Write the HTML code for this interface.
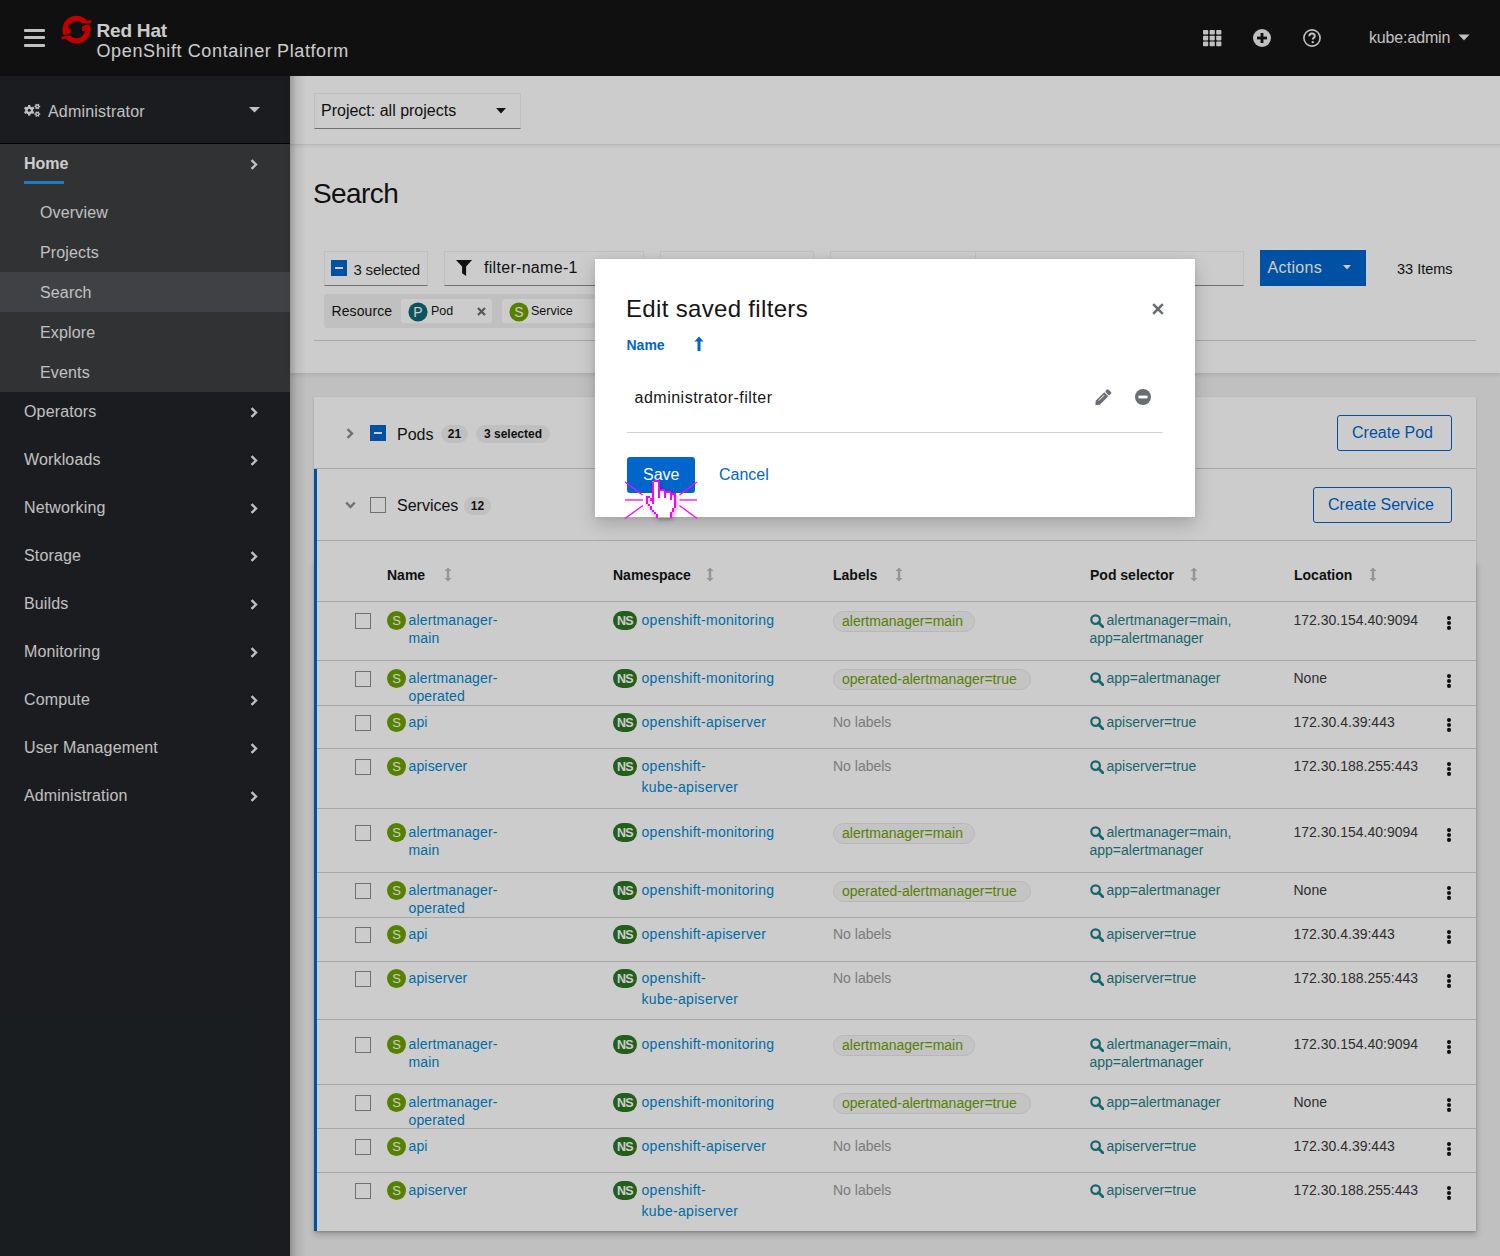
<!DOCTYPE html>
<html><head><meta charset="utf-8"><title>Search</title>
<style>
html,body{margin:0;padding:0;width:1500px;height:1256px;overflow:hidden;background:#cccccc}
body{position:relative;font-family:"Liberation Sans", sans-serif}
.t{position:absolute;white-space:nowrap;margin:0;padding:0}
.r{position:absolute;display:block}
</style></head><body>
<div class="r" style="left:0px;top:0px;width:1500px;height:76px;background:#151515"></div>
<div class="r" style="left:24px;top:29px;width:21px;height:3px;background:#f0f0f0;border-radius:1px"></div>
<div class="r" style="left:24px;top:36px;width:21px;height:3px;background:#f0f0f0;border-radius:1px"></div>
<div class="r" style="left:24px;top:43.5px;width:21px;height:3px;background:#f0f0f0;border-radius:1px"></div>
<svg class="r" style="left:56px;top:12px;" width="40" height="36" viewBox="56 12 40 36"><circle cx="76.5" cy="29.7" r="11.3" fill="none" stroke="#ee0000" stroke-width="5.4"/>
<polygon points="79.5,24.6 93,21.8 93,23.4 80.5,26.2" fill="#151515"/>
<polygon points="73.5,34.8 60,37.6 60,36 72.5,33.2" fill="#151515"/>
<polygon points="85.5,21.2 91.2,19.8 91.6,22.6 86,23.8" fill="#ee0000"/>
<polygon points="82.2,26.1 87.5,25.2 87,31 82.2,31" fill="#ee0000"/>
<polygon points="67.5,38.2 61.8,39.6 61.4,36.8 67,35.6" fill="#ee0000"/>
<polygon points="70.8,33.3 65.5,34.2 66,28.4 70.8,28.4" fill="#ee0000"/></svg>
<div class="t" style="left:96.5px;top:21.12px;font-size:19px;line-height:19px;color:#ffffff;font-weight:700;letter-spacing:-0.2px">Red Hat</div>
<div class="t" style="left:96.5px;top:41.76px;font-size:18px;line-height:18px;color:#ffffff;font-weight:400;letter-spacing:0.62px">OpenShift Container Platform</div>
<svg class="r" style="left:1203px;top:30px;" width="19" height="17" viewBox="0 0 19 17"><g fill="#f0f0f0"><rect x="0.0" y="0.0" width="5.2" height="4.6" rx="0.8"/><rect x="0.0" y="5.8" width="5.2" height="4.6" rx="0.8"/><rect x="0.0" y="11.6" width="5.2" height="4.6" rx="0.8"/><rect x="6.6" y="0.0" width="5.2" height="4.6" rx="0.8"/><rect x="6.6" y="5.8" width="5.2" height="4.6" rx="0.8"/><rect x="6.6" y="11.6" width="5.2" height="4.6" rx="0.8"/><rect x="13.2" y="0.0" width="5.2" height="4.6" rx="0.8"/><rect x="13.2" y="5.8" width="5.2" height="4.6" rx="0.8"/><rect x="13.2" y="11.6" width="5.2" height="4.6" rx="0.8"/></g></svg>
<svg class="r" style="left:1253px;top:29px;" width="18" height="18" viewBox="0 0 18 18"><circle cx="9" cy="9" r="9" fill="#f0f0f0"/><rect x="4" y="7.6" width="10" height="2.8" fill="#151515"/><rect x="7.6" y="4" width="2.8" height="10" fill="#151515"/></svg>
<svg class="r" style="left:1303px;top:29px;" width="18" height="18" viewBox="0 0 18 18"><circle cx="9" cy="9" r="8.1" fill="none" stroke="#f0f0f0" stroke-width="1.6"/><path d="M6.3 7.2 C6.3 5.3 7.5 4.4 9 4.4 C10.6 4.4 11.8 5.4 11.8 6.9 C11.8 8.6 9.8 8.9 9.8 10.6" fill="none" stroke="#f0f0f0" stroke-width="2"/><circle cx="9.8" cy="13.1" r="1.2" fill="#f0f0f0"/></svg>
<div class="t" style="left:1369px;top:30.46px;font-size:16px;line-height:16px;color:#f0f0f0;font-weight:400;letter-spacing:-0.15px">kube:admin</div>
<svg class="r" style="left:1458px;top:34px;" width="12" height="7" viewBox="0 0 12 7"><polygon points="0.5,0.5 11.5,0.5 6,6.5" fill="#f0f0f0"/></svg>
<div class="r" style="left:0px;top:76px;width:290px;height:1180px;background:#212427"></div>
<div class="r" style="left:0px;top:143px;width:290px;height:1px;background:#030303"></div>
<div class="r" style="left:0px;top:144px;width:290px;height:248px;background:#3c3f42"></div>
<div class="r" style="left:0px;top:272px;width:290px;height:40px;background:#4f5255"></div>
<svg class="r" style="left:20px;top:98px;" width="24" height="24" viewBox="20 98 24 24"><circle cx="29.2" cy="110.3" r="3.9" fill="#f0f0f0"/><rect x="28.0" y="104.99999999999999" width="2.4" height="2.4" fill="#f0f0f0" transform="rotate(0.0 29.2 110.3)"/><rect x="28.0" y="104.99999999999999" width="2.4" height="2.4" fill="#f0f0f0" transform="rotate(60.0 29.2 110.3)"/><rect x="28.0" y="104.99999999999999" width="2.4" height="2.4" fill="#f0f0f0" transform="rotate(120.0 29.2 110.3)"/><rect x="28.0" y="104.99999999999999" width="2.4" height="2.4" fill="#f0f0f0" transform="rotate(180.0 29.2 110.3)"/><rect x="28.0" y="104.99999999999999" width="2.4" height="2.4" fill="#f0f0f0" transform="rotate(240.0 29.2 110.3)"/><rect x="28.0" y="104.99999999999999" width="2.4" height="2.4" fill="#f0f0f0" transform="rotate(300.0 29.2 110.3)"/><circle cx="29.2" cy="110.3" r="1.5" fill="#212427"/><circle cx="37.3" cy="106.5" r="2.0" fill="#f0f0f0"/><rect x="36.599999999999994" y="103.6" width="1.4" height="1.9" fill="#f0f0f0" transform="rotate(30.0 37.3 106.5)"/><rect x="36.599999999999994" y="103.6" width="1.4" height="1.9" fill="#f0f0f0" transform="rotate(90.0 37.3 106.5)"/><rect x="36.599999999999994" y="103.6" width="1.4" height="1.9" fill="#f0f0f0" transform="rotate(150.0 37.3 106.5)"/><rect x="36.599999999999994" y="103.6" width="1.4" height="1.9" fill="#f0f0f0" transform="rotate(210.0 37.3 106.5)"/><rect x="36.599999999999994" y="103.6" width="1.4" height="1.9" fill="#f0f0f0" transform="rotate(270.0 37.3 106.5)"/><rect x="36.599999999999994" y="103.6" width="1.4" height="1.9" fill="#f0f0f0" transform="rotate(330.0 37.3 106.5)"/><circle cx="37.3" cy="106.5" r="0.8" fill="#212427"/><circle cx="37.3" cy="114.1" r="2.0" fill="#f0f0f0"/><rect x="36.599999999999994" y="111.19999999999999" width="1.4" height="1.9" fill="#f0f0f0" transform="rotate(30.0 37.3 114.1)"/><rect x="36.599999999999994" y="111.19999999999999" width="1.4" height="1.9" fill="#f0f0f0" transform="rotate(90.0 37.3 114.1)"/><rect x="36.599999999999994" y="111.19999999999999" width="1.4" height="1.9" fill="#f0f0f0" transform="rotate(150.0 37.3 114.1)"/><rect x="36.599999999999994" y="111.19999999999999" width="1.4" height="1.9" fill="#f0f0f0" transform="rotate(210.0 37.3 114.1)"/><rect x="36.599999999999994" y="111.19999999999999" width="1.4" height="1.9" fill="#f0f0f0" transform="rotate(270.0 37.3 114.1)"/><rect x="36.599999999999994" y="111.19999999999999" width="1.4" height="1.9" fill="#f0f0f0" transform="rotate(330.0 37.3 114.1)"/><circle cx="37.3" cy="114.1" r="0.8" fill="#212427"/></svg>
<div class="t" style="left:48px;top:103.86px;font-size:16px;line-height:16px;color:#f0f0f0;font-weight:400;letter-spacing:0.2px">Administrator</div>
<svg class="r" style="left:249px;top:107px;" width="11" height="6" viewBox="0 0 11 6"><polygon points="0,0 11,0 5.5,5.5" fill="#f0f0f0"/></svg>
<div class="t" style="left:24px;top:156.46px;font-size:16px;line-height:16px;color:#ffffff;font-weight:700;">Home</div>
<div class="r" style="left:24px;top:181px;width:40px;height:3px;background:#2b9af3"></div>
<svg class="r" style="left:250px;top:159px;" width="8" height="11" viewBox="0 0 8 11"><polyline points="1.5,1.2 6,5.5 1.5,9.8" fill="none" stroke="#f0f0f0" stroke-width="2.4"/></svg>
<div class="t" style="left:40px;top:204.96px;font-size:16px;line-height:16px;color:#f0f0f0;font-weight:400;letter-spacing:0.15px">Overview</div>
<div class="t" style="left:40px;top:244.96px;font-size:16px;line-height:16px;color:#f0f0f0;font-weight:400;letter-spacing:0.15px">Projects</div>
<div class="t" style="left:40px;top:284.96px;font-size:16px;line-height:16px;color:#f0f0f0;font-weight:400;letter-spacing:0.15px">Search</div>
<div class="t" style="left:40px;top:324.96px;font-size:16px;line-height:16px;color:#f0f0f0;font-weight:400;letter-spacing:0.15px">Explore</div>
<div class="t" style="left:40px;top:364.96px;font-size:16px;line-height:16px;color:#f0f0f0;font-weight:400;letter-spacing:0.15px">Events</div>
<div class="t" style="left:24px;top:404.46px;font-size:16px;line-height:16px;color:#f0f0f0;font-weight:400;letter-spacing:0.15px">Operators</div>
<svg class="r" style="left:250px;top:407px;" width="8" height="11" viewBox="0 0 8 11"><polyline points="1.5,1.2 6,5.5 1.5,9.8" fill="none" stroke="#f0f0f0" stroke-width="2.4"/></svg>
<div class="t" style="left:24px;top:452.46px;font-size:16px;line-height:16px;color:#f0f0f0;font-weight:400;letter-spacing:0.15px">Workloads</div>
<svg class="r" style="left:250px;top:455px;" width="8" height="11" viewBox="0 0 8 11"><polyline points="1.5,1.2 6,5.5 1.5,9.8" fill="none" stroke="#f0f0f0" stroke-width="2.4"/></svg>
<div class="t" style="left:24px;top:500.46px;font-size:16px;line-height:16px;color:#f0f0f0;font-weight:400;letter-spacing:0.15px">Networking</div>
<svg class="r" style="left:250px;top:503px;" width="8" height="11" viewBox="0 0 8 11"><polyline points="1.5,1.2 6,5.5 1.5,9.8" fill="none" stroke="#f0f0f0" stroke-width="2.4"/></svg>
<div class="t" style="left:24px;top:548.46px;font-size:16px;line-height:16px;color:#f0f0f0;font-weight:400;letter-spacing:0.15px">Storage</div>
<svg class="r" style="left:250px;top:551px;" width="8" height="11" viewBox="0 0 8 11"><polyline points="1.5,1.2 6,5.5 1.5,9.8" fill="none" stroke="#f0f0f0" stroke-width="2.4"/></svg>
<div class="t" style="left:24px;top:596.46px;font-size:16px;line-height:16px;color:#f0f0f0;font-weight:400;letter-spacing:0.15px">Builds</div>
<svg class="r" style="left:250px;top:599px;" width="8" height="11" viewBox="0 0 8 11"><polyline points="1.5,1.2 6,5.5 1.5,9.8" fill="none" stroke="#f0f0f0" stroke-width="2.4"/></svg>
<div class="t" style="left:24px;top:644.46px;font-size:16px;line-height:16px;color:#f0f0f0;font-weight:400;letter-spacing:0.15px">Monitoring</div>
<svg class="r" style="left:250px;top:647px;" width="8" height="11" viewBox="0 0 8 11"><polyline points="1.5,1.2 6,5.5 1.5,9.8" fill="none" stroke="#f0f0f0" stroke-width="2.4"/></svg>
<div class="t" style="left:24px;top:692.46px;font-size:16px;line-height:16px;color:#f0f0f0;font-weight:400;letter-spacing:0.15px">Compute</div>
<svg class="r" style="left:250px;top:695px;" width="8" height="11" viewBox="0 0 8 11"><polyline points="1.5,1.2 6,5.5 1.5,9.8" fill="none" stroke="#f0f0f0" stroke-width="2.4"/></svg>
<div class="t" style="left:24px;top:740.46px;font-size:16px;line-height:16px;color:#f0f0f0;font-weight:400;letter-spacing:0.15px">User Management</div>
<svg class="r" style="left:250px;top:743px;" width="8" height="11" viewBox="0 0 8 11"><polyline points="1.5,1.2 6,5.5 1.5,9.8" fill="none" stroke="#f0f0f0" stroke-width="2.4"/></svg>
<div class="t" style="left:24px;top:788.46px;font-size:16px;line-height:16px;color:#f0f0f0;font-weight:400;letter-spacing:0.15px">Administration</div>
<svg class="r" style="left:250px;top:791px;" width="8" height="11" viewBox="0 0 8 11"><polyline points="1.5,1.2 6,5.5 1.5,9.8" fill="none" stroke="#f0f0f0" stroke-width="2.4"/></svg>
<div class="r" style="left:290px;top:76px;width:1210px;height:1180px;background:#f0f0f0"></div>
<div class="r" style="left:290px;top:76px;width:1210px;height:297px;background:#ffffff;box-shadow:0 2px 4px rgba(3,3,3,0.1)"></div>
<div class="r" style="left:290px;top:144px;width:1210px;height:1px;background:#e8e8e8"></div>
<div class="r" style="left:290px;top:145px;width:1210px;height:4px;background:linear-gradient(to bottom, rgba(3,3,3,0.05), rgba(3,3,3,0))"></div>
<div class="r" style="left:290px;top:76px;width:16px;height:1180px;background:linear-gradient(to right, rgba(3,3,3,0.24), rgba(3,3,3,0.08) 40%, rgba(3,3,3,0))"></div>
<div class="r" style="left:314px;top:93px;width:207px;height:36px;background:#fff;box-sizing:border-box;border:1px solid #f0f0f0;border-bottom-color:#8a8d90"></div>
<div class="t" style="left:321px;top:103.16px;font-size:16px;line-height:16px;color:#151515;font-weight:400;">Project: all projects</div>
<svg class="r" style="left:496px;top:108px;" width="10" height="6.5" viewBox="0 0 10 6.5"><polygon points="0,0 10,0 5.0,5.5" fill="#151515"/></svg>
<div class="t" style="left:313px;top:180.30px;font-size:28px;line-height:28px;color:#151515;font-weight:400;letter-spacing:-0.6px">Search</div>
<div class="r" style="left:324px;top:251px;width:104px;height:35px;background:#fff;box-sizing:border-box;border:1px solid #f0f0f0;border-bottom-color:#8a8d90"></div>
<svg class="r" style="left:331px;top:260px;" width="16" height="16" viewBox="0 0 16 16"><rect x="0" y="0" width="16" height="16" fill="#0066cc"/><rect x="4" y="7" width="8" height="2" fill="#fff"/></svg>
<div class="t" style="left:353.5px;top:261.50px;font-size:15px;line-height:15px;color:#1f1f1f;font-weight:400;letter-spacing:-0.2px">3 selected</div>
<div class="r" style="left:444px;top:251px;width:200px;height:35px;background:#fff;box-sizing:border-box;border:1px solid #f0f0f0;border-bottom-color:#8a8d90"></div>
<svg class="r" style="left:456px;top:259px;" width="16" height="18" viewBox="0 0 16 18"><path d="M0 1 H16 L10.1 7.6 V17 L6.1 14.2 V7.6 Z" fill="#151515"/></svg>
<div class="t" style="left:484px;top:260.46px;font-size:16px;line-height:16px;color:#151515;font-weight:400;letter-spacing:0.3px">filter-name-1</div>
<div class="r" style="left:660px;top:251px;width:154px;height:35px;background:#fff;box-sizing:border-box;border:1px solid #f0f0f0;border-bottom-color:#8a8d90"></div>
<div class="r" style="left:830px;top:251px;width:146px;height:35px;background:#fff;box-sizing:border-box;border:1px solid #f0f0f0;border-bottom-color:#8a8d90"></div>
<div class="r" style="left:975px;top:251px;width:269px;height:35px;background:#fff;box-sizing:border-box;border:1px solid #f0f0f0;border-bottom-color:#8a8d90"></div>
<div class="r" style="left:1260px;top:250px;width:106px;height:36px;background:#0066cc"></div>
<div class="t" style="left:1267.5px;top:260.46px;font-size:16px;line-height:16px;color:#ffffff;font-weight:400;letter-spacing:0.3px">Actions</div>
<svg class="r" style="left:1343px;top:265px;" width="8" height="5.5" viewBox="0 0 8 5.5"><polygon points="0,0 8,0 4.0,4.5" fill="#ffffff"/></svg>
<div class="t" style="left:1397px;top:262.23px;font-size:14.5px;line-height:14.5px;color:#151515;font-weight:400;">33 Items</div>
<div class="r" style="left:324px;top:294px;width:560px;height:34px;background:#f0f0f0;border-radius:3px"></div>
<div class="t" style="left:331.5px;top:304.15px;font-size:14px;line-height:14px;color:#151515;font-weight:400;letter-spacing:0.1px">Resource</div>
<div class="r" style="left:401px;top:299px;width:91px;height:24px;background:#fff;border-radius:3px"></div>
<svg class="r" style="left:408px;top:302px;" width="20" height="20" viewBox="0 0 20 20"><circle cx="10" cy="10" r="9.6" fill="#0e6a73"/></svg>
<div class="t" style="left:408px;top:302px;width:20px;height:20px;line-height:20px;text-align:center;font-size:14px;color:#fff">P</div>
<div class="t" style="left:431px;top:305.42px;font-size:12.5px;line-height:12.5px;color:#151515;font-weight:400;">Pod</div>
<svg class="r" style="left:477px;top:307px;" width="9" height="9" viewBox="0 0 9 9"><path d="M1 1 L8 8 M8 1 L1 8" stroke="#6a6e73" stroke-width="2.2"/></svg>
<div class="r" style="left:502px;top:299px;width:200px;height:24px;background:#fff;border-radius:3px"></div>
<svg class="r" style="left:509px;top:302px;" width="20" height="20" viewBox="0 0 20 20"><circle cx="10" cy="10" r="9.6" fill="#6ca100"/></svg>
<div class="t" style="left:509px;top:302px;width:20px;height:20px;line-height:20px;text-align:center;font-size:14px;color:#fff">S</div>
<div class="t" style="left:531px;top:305.42px;font-size:12.5px;line-height:12.5px;color:#151515;font-weight:400;">Service</div>
<div class="r" style="left:314px;top:340px;width:1162px;height:1px;background:#d2d2d2"></div>
<div class="r" style="left:314px;top:560px;width:1162px;height:671px;box-shadow:1px 4px 6px rgba(3,3,3,0.2)"></div>
<div class="r" style="left:314px;top:397px;width:1162px;height:834px;background:#fff;box-shadow:0 1px 2px rgba(3,3,3,0.14), 0 0 1px rgba(3,3,3,0.08)"></div>
<svg class="r" style="left:346px;top:428px;" width="8" height="11" viewBox="0 0 8 11"><polyline points="1.5,1.2 6,5.5 1.5,9.8" fill="none" stroke="#8a8d90" stroke-width="2.4"/></svg>
<svg class="r" style="left:370px;top:425px;" width="16" height="16" viewBox="0 0 16 16"><rect x="0" y="0" width="16" height="16" fill="#0066cc"/><rect x="4" y="7" width="8" height="2" fill="#fff"/></svg>
<div class="t" style="left:397px;top:426.86px;font-size:16px;line-height:16px;color:#151515;font-weight:400;">Pods</div>
<div class="r" style="left:441px;top:425px;width:27px;height:18px;background:#f0f0f0;border-radius:9px"></div>
<div class="t" style="left:441px;top:425px;width:27px;height:18px;line-height:18px;text-align:center;font-size:12px;font-weight:700;color:#151515">21</div>
<div class="r" style="left:476px;top:425px;width:74px;height:18px;background:#f0f0f0;border-radius:9px"></div>
<div class="t" style="left:476px;top:425px;width:74px;height:18px;line-height:18px;text-align:center;font-size:12px;font-weight:700;color:#151515">3 selected</div>
<div class="r" style="left:1337px;top:415px;width:115px;height:36px;box-sizing:border-box;border:1px solid #0066cc;border-radius:3px"></div>
<div class="t" style="left:1352px;top:425.46px;font-size:16px;line-height:16px;color:#0066cc;font-weight:400;">Create Pod</div>
<div class="r" style="left:314px;top:468px;width:1162px;height:1px;background:#d2d2d2"></div>
<div class="r" style="left:314px;top:469px;width:3px;height:762px;background:#0066cc"></div>
<svg class="r" style="left:345px;top:501px;" width="11" height="8" viewBox="0 0 11 8"><polyline points="1.2,1.5 5.5,6 9.8,1.5" fill="none" stroke="#8a8d90" stroke-width="2.4"/></svg>
<svg class="r" style="left:370px;top:497px;" width="16" height="16" viewBox="0 0 16 16"><rect x="0.5" y="0.5" width="15" height="15" fill="#fff" stroke="#8a8d90" stroke-width="1"/></svg>
<div class="t" style="left:397px;top:498.46px;font-size:16px;line-height:16px;color:#151515;font-weight:400;">Services</div>
<div class="r" style="left:464px;top:497px;width:27px;height:18px;background:#f0f0f0;border-radius:9px"></div>
<div class="t" style="left:464px;top:497px;width:27px;height:18px;line-height:18px;text-align:center;font-size:12px;font-weight:700;color:#151515">12</div>
<div class="r" style="left:1313px;top:487px;width:139px;height:36px;box-sizing:border-box;border:1px solid #0066cc;border-radius:3px"></div>
<div class="t" style="left:1328px;top:497.46px;font-size:16px;line-height:16px;color:#0066cc;font-weight:400;">Create Service</div>
<div class="r" style="left:317px;top:540px;width:1159px;height:1px;background:#d2d2d2"></div>
<div class="t" style="left:387px;top:567.55px;font-size:14px;line-height:14px;color:#151515;font-weight:700;">Name</div>
<svg class="r" style="left:444px;top:567px;" width="8" height="15" viewBox="0 0 8 15"><path d="M4 0.5 L7.5 4 H5.2 V11 H7.5 L4 14.5 L0.5 11 H2.8 V4 H0.5 Z" fill="#b8bbbe"/></svg>
<div class="t" style="left:613px;top:567.55px;font-size:14px;line-height:14px;color:#151515;font-weight:700;">Namespace</div>
<svg class="r" style="left:706px;top:567px;" width="8" height="15" viewBox="0 0 8 15"><path d="M4 0.5 L7.5 4 H5.2 V11 H7.5 L4 14.5 L0.5 11 H2.8 V4 H0.5 Z" fill="#b8bbbe"/></svg>
<div class="t" style="left:833px;top:567.55px;font-size:14px;line-height:14px;color:#151515;font-weight:700;">Labels</div>
<svg class="r" style="left:895px;top:567px;" width="8" height="15" viewBox="0 0 8 15"><path d="M4 0.5 L7.5 4 H5.2 V11 H7.5 L4 14.5 L0.5 11 H2.8 V4 H0.5 Z" fill="#b8bbbe"/></svg>
<div class="t" style="left:1090px;top:567.55px;font-size:14px;line-height:14px;color:#151515;font-weight:700;">Pod selector</div>
<svg class="r" style="left:1190px;top:567px;" width="8" height="15" viewBox="0 0 8 15"><path d="M4 0.5 L7.5 4 H5.2 V11 H7.5 L4 14.5 L0.5 11 H2.8 V4 H0.5 Z" fill="#b8bbbe"/></svg>
<div class="t" style="left:1294px;top:567.55px;font-size:14px;line-height:14px;color:#151515;font-weight:700;">Location</div>
<svg class="r" style="left:1369px;top:567px;" width="8" height="15" viewBox="0 0 8 15"><path d="M4 0.5 L7.5 4 H5.2 V11 H7.5 L4 14.5 L0.5 11 H2.8 V4 H0.5 Z" fill="#b8bbbe"/></svg>
<div class="r" style="left:317px;top:601px;width:1159px;height:1px;background:#d2d2d2"></div>
<svg class="r" style="left:355px;top:613px;" width="16" height="16" viewBox="0 0 16 16"><rect x="0.5" y="0.5" width="15" height="15" fill="#fff" stroke="#8a8d90" stroke-width="1"/></svg>
<svg class="r" style="left:387px;top:611px;" width="19" height="19" viewBox="0 0 19 19"><circle cx="9.5" cy="9.5" r="9.5" fill="#6ca100"/></svg>
<div class="t" style="left:387px;top:611px;width:19px;height:19px;line-height:20.5px;text-align:center;font-size:13px;font-weight:400;color:#fff">S</div>
<div class="t" style="left:408.5px;top:613.45px;font-size:14px;line-height:14px;color:#0088ce;font-weight:400;letter-spacing:0.15px">alertmanager-</div>
<div class="t" style="left:408.5px;top:631.45px;font-size:14px;line-height:14px;color:#0088ce;font-weight:400;letter-spacing:0.15px">main</div>
<div class="r" style="left:613px;top:611px;width:24px;height:19px;background:#2d7623;border-radius:10px"></div>
<div class="t" style="left:613px;top:611px;width:24px;height:19px;line-height:20px;text-align:center;font-size:12.5px;font-weight:700;color:#fff;letter-spacing:-0.6px">NS</div>
<div class="t" style="left:641.5px;top:613.45px;font-size:14px;line-height:14px;color:#0088ce;font-weight:400;letter-spacing:0.3px">openshift-monitoring</div>
<div class="r" style="left:833px;top:611px;width:142px;height:21px;box-sizing:border-box;background:#f5f5f5;border:1px solid #e6e6e6;border-radius:11px"></div>
<div class="t" style="left:842px;top:614.35px;font-size:14px;line-height:14px;color:#6ca100;font-weight:400;">alertmanager=main</div>
<svg class="r" style="left:1090px;top:614px;" width="14" height="14" viewBox="0 0 14 14"><circle cx="5.6" cy="5.6" r="4.3" fill="none" stroke="#1f7f86" stroke-width="2.2"/><line x1="8.6" y1="8.6" x2="12.8" y2="12.8" stroke="#1f7f86" stroke-width="2.8" stroke-linecap="round"/></svg>
<div class="t" style="left:1106.5px;top:613.45px;font-size:14px;line-height:14px;color:#1f7f86;font-weight:400;">alertmanager=main,</div>
<div class="t" style="left:1089.5px;top:631.45px;font-size:14px;line-height:14px;color:#1f7f86;font-weight:400;">app=alertmanager</div>
<div class="t" style="left:1293.5px;top:613.45px;font-size:14px;line-height:14px;color:#3a3a3a;font-weight:400;">172.30.154.40:9094</div>
<svg class="r" style="left:1446px;top:616px;" width="6" height="16" viewBox="0 0 6 16"><g fill="#151515"><circle cx="3" cy="2.1" r="2.05"/><circle cx="3" cy="7" r="2.05"/><circle cx="3" cy="11.9" r="2.05"/></g></svg>
<div class="r" style="left:317px;top:660px;width:1159px;height:1px;background:#d2d2d2"></div>
<svg class="r" style="left:355px;top:671px;" width="16" height="16" viewBox="0 0 16 16"><rect x="0.5" y="0.5" width="15" height="15" fill="#fff" stroke="#8a8d90" stroke-width="1"/></svg>
<svg class="r" style="left:387px;top:669px;" width="19" height="19" viewBox="0 0 19 19"><circle cx="9.5" cy="9.5" r="9.5" fill="#6ca100"/></svg>
<div class="t" style="left:387px;top:669px;width:19px;height:19px;line-height:20.5px;text-align:center;font-size:13px;font-weight:400;color:#fff">S</div>
<div class="t" style="left:408.5px;top:671.45px;font-size:14px;line-height:14px;color:#0088ce;font-weight:400;letter-spacing:0.15px">alertmanager-</div>
<div class="t" style="left:408.5px;top:689.45px;font-size:14px;line-height:14px;color:#0088ce;font-weight:400;letter-spacing:0.15px">operated</div>
<div class="r" style="left:613px;top:669px;width:24px;height:19px;background:#2d7623;border-radius:10px"></div>
<div class="t" style="left:613px;top:669px;width:24px;height:19px;line-height:20px;text-align:center;font-size:12.5px;font-weight:700;color:#fff;letter-spacing:-0.6px">NS</div>
<div class="t" style="left:641.5px;top:671.45px;font-size:14px;line-height:14px;color:#0088ce;font-weight:400;letter-spacing:0.3px">openshift-monitoring</div>
<div class="r" style="left:833px;top:669px;width:198px;height:21px;box-sizing:border-box;background:#f5f5f5;border:1px solid #e6e6e6;border-radius:11px"></div>
<div class="t" style="left:842px;top:672.35px;font-size:14px;line-height:14px;color:#6ca100;font-weight:400;">operated-alertmanager=true</div>
<svg class="r" style="left:1090px;top:672px;" width="14" height="14" viewBox="0 0 14 14"><circle cx="5.6" cy="5.6" r="4.3" fill="none" stroke="#1f7f86" stroke-width="2.2"/><line x1="8.6" y1="8.6" x2="12.8" y2="12.8" stroke="#1f7f86" stroke-width="2.8" stroke-linecap="round"/></svg>
<div class="t" style="left:1106.5px;top:671.45px;font-size:14px;line-height:14px;color:#1f7f86;font-weight:400;">app=alertmanager</div>
<div class="t" style="left:1293.5px;top:671.45px;font-size:14px;line-height:14px;color:#3a3a3a;font-weight:400;">None</div>
<svg class="r" style="left:1446px;top:674px;" width="6" height="16" viewBox="0 0 6 16"><g fill="#151515"><circle cx="3" cy="2.1" r="2.05"/><circle cx="3" cy="7" r="2.05"/><circle cx="3" cy="11.9" r="2.05"/></g></svg>
<div class="r" style="left:317px;top:705px;width:1159px;height:1px;background:#d2d2d2"></div>
<svg class="r" style="left:355px;top:715px;" width="16" height="16" viewBox="0 0 16 16"><rect x="0.5" y="0.5" width="15" height="15" fill="#fff" stroke="#8a8d90" stroke-width="1"/></svg>
<svg class="r" style="left:387px;top:713px;" width="19" height="19" viewBox="0 0 19 19"><circle cx="9.5" cy="9.5" r="9.5" fill="#6ca100"/></svg>
<div class="t" style="left:387px;top:713px;width:19px;height:19px;line-height:20.5px;text-align:center;font-size:13px;font-weight:400;color:#fff">S</div>
<div class="t" style="left:408.5px;top:715.45px;font-size:14px;line-height:14px;color:#0088ce;font-weight:400;letter-spacing:0.15px">api</div>
<div class="r" style="left:613px;top:713px;width:24px;height:19px;background:#2d7623;border-radius:10px"></div>
<div class="t" style="left:613px;top:713px;width:24px;height:19px;line-height:20px;text-align:center;font-size:12.5px;font-weight:700;color:#fff;letter-spacing:-0.6px">NS</div>
<div class="t" style="left:641.5px;top:715.45px;font-size:14px;line-height:14px;color:#0088ce;font-weight:400;letter-spacing:0.3px">openshift-apiserver</div>
<div class="t" style="left:833px;top:715.45px;font-size:14px;line-height:14px;color:#9a9a9a;font-weight:400;">No labels</div>
<svg class="r" style="left:1090px;top:716px;" width="14" height="14" viewBox="0 0 14 14"><circle cx="5.6" cy="5.6" r="4.3" fill="none" stroke="#1f7f86" stroke-width="2.2"/><line x1="8.6" y1="8.6" x2="12.8" y2="12.8" stroke="#1f7f86" stroke-width="2.8" stroke-linecap="round"/></svg>
<div class="t" style="left:1106.5px;top:715.45px;font-size:14px;line-height:14px;color:#1f7f86;font-weight:400;">apiserver=true</div>
<div class="t" style="left:1293.5px;top:715.45px;font-size:14px;line-height:14px;color:#3a3a3a;font-weight:400;">172.30.4.39:443</div>
<svg class="r" style="left:1446px;top:718px;" width="6" height="16" viewBox="0 0 6 16"><g fill="#151515"><circle cx="3" cy="2.1" r="2.05"/><circle cx="3" cy="7" r="2.05"/><circle cx="3" cy="11.9" r="2.05"/></g></svg>
<div class="r" style="left:317px;top:748px;width:1159px;height:1px;background:#d2d2d2"></div>
<svg class="r" style="left:355px;top:759px;" width="16" height="16" viewBox="0 0 16 16"><rect x="0.5" y="0.5" width="15" height="15" fill="#fff" stroke="#8a8d90" stroke-width="1"/></svg>
<svg class="r" style="left:387px;top:757px;" width="19" height="19" viewBox="0 0 19 19"><circle cx="9.5" cy="9.5" r="9.5" fill="#6ca100"/></svg>
<div class="t" style="left:387px;top:757px;width:19px;height:19px;line-height:20.5px;text-align:center;font-size:13px;font-weight:400;color:#fff">S</div>
<div class="t" style="left:408.5px;top:759.45px;font-size:14px;line-height:14px;color:#0088ce;font-weight:400;letter-spacing:0.15px">apiserver</div>
<div class="r" style="left:613px;top:757px;width:24px;height:19px;background:#2d7623;border-radius:10px"></div>
<div class="t" style="left:613px;top:757px;width:24px;height:19px;line-height:20px;text-align:center;font-size:12.5px;font-weight:700;color:#fff;letter-spacing:-0.6px">NS</div>
<div class="t" style="left:641.5px;top:759.45px;font-size:14px;line-height:14px;color:#0088ce;font-weight:400;letter-spacing:0.3px">openshift-</div>
<div class="t" style="left:641.5px;top:780.45px;font-size:14px;line-height:14px;color:#0088ce;font-weight:400;letter-spacing:0.3px">kube-apiserver</div>
<div class="t" style="left:833px;top:759.45px;font-size:14px;line-height:14px;color:#9a9a9a;font-weight:400;">No labels</div>
<svg class="r" style="left:1090px;top:760px;" width="14" height="14" viewBox="0 0 14 14"><circle cx="5.6" cy="5.6" r="4.3" fill="none" stroke="#1f7f86" stroke-width="2.2"/><line x1="8.6" y1="8.6" x2="12.8" y2="12.8" stroke="#1f7f86" stroke-width="2.8" stroke-linecap="round"/></svg>
<div class="t" style="left:1106.5px;top:759.45px;font-size:14px;line-height:14px;color:#1f7f86;font-weight:400;">apiserver=true</div>
<div class="t" style="left:1293.5px;top:759.45px;font-size:14px;line-height:14px;color:#3a3a3a;font-weight:400;">172.30.188.255:443</div>
<svg class="r" style="left:1446px;top:762px;" width="6" height="16" viewBox="0 0 6 16"><g fill="#151515"><circle cx="3" cy="2.1" r="2.05"/><circle cx="3" cy="7" r="2.05"/><circle cx="3" cy="11.9" r="2.05"/></g></svg>
<div class="r" style="left:317px;top:808px;width:1159px;height:1px;background:#d2d2d2"></div>
<svg class="r" style="left:355px;top:825px;" width="16" height="16" viewBox="0 0 16 16"><rect x="0.5" y="0.5" width="15" height="15" fill="#fff" stroke="#8a8d90" stroke-width="1"/></svg>
<svg class="r" style="left:387px;top:823px;" width="19" height="19" viewBox="0 0 19 19"><circle cx="9.5" cy="9.5" r="9.5" fill="#6ca100"/></svg>
<div class="t" style="left:387px;top:823px;width:19px;height:19px;line-height:20.5px;text-align:center;font-size:13px;font-weight:400;color:#fff">S</div>
<div class="t" style="left:408.5px;top:825.45px;font-size:14px;line-height:14px;color:#0088ce;font-weight:400;letter-spacing:0.15px">alertmanager-</div>
<div class="t" style="left:408.5px;top:843.45px;font-size:14px;line-height:14px;color:#0088ce;font-weight:400;letter-spacing:0.15px">main</div>
<div class="r" style="left:613px;top:823px;width:24px;height:19px;background:#2d7623;border-radius:10px"></div>
<div class="t" style="left:613px;top:823px;width:24px;height:19px;line-height:20px;text-align:center;font-size:12.5px;font-weight:700;color:#fff;letter-spacing:-0.6px">NS</div>
<div class="t" style="left:641.5px;top:825.45px;font-size:14px;line-height:14px;color:#0088ce;font-weight:400;letter-spacing:0.3px">openshift-monitoring</div>
<div class="r" style="left:833px;top:823px;width:142px;height:21px;box-sizing:border-box;background:#f5f5f5;border:1px solid #e6e6e6;border-radius:11px"></div>
<div class="t" style="left:842px;top:826.35px;font-size:14px;line-height:14px;color:#6ca100;font-weight:400;">alertmanager=main</div>
<svg class="r" style="left:1090px;top:826px;" width="14" height="14" viewBox="0 0 14 14"><circle cx="5.6" cy="5.6" r="4.3" fill="none" stroke="#1f7f86" stroke-width="2.2"/><line x1="8.6" y1="8.6" x2="12.8" y2="12.8" stroke="#1f7f86" stroke-width="2.8" stroke-linecap="round"/></svg>
<div class="t" style="left:1106.5px;top:825.45px;font-size:14px;line-height:14px;color:#1f7f86;font-weight:400;">alertmanager=main,</div>
<div class="t" style="left:1089.5px;top:843.45px;font-size:14px;line-height:14px;color:#1f7f86;font-weight:400;">app=alertmanager</div>
<div class="t" style="left:1293.5px;top:825.45px;font-size:14px;line-height:14px;color:#3a3a3a;font-weight:400;">172.30.154.40:9094</div>
<svg class="r" style="left:1446px;top:828px;" width="6" height="16" viewBox="0 0 6 16"><g fill="#151515"><circle cx="3" cy="2.1" r="2.05"/><circle cx="3" cy="7" r="2.05"/><circle cx="3" cy="11.9" r="2.05"/></g></svg>
<div class="r" style="left:317px;top:872px;width:1159px;height:1px;background:#d2d2d2"></div>
<svg class="r" style="left:355px;top:883px;" width="16" height="16" viewBox="0 0 16 16"><rect x="0.5" y="0.5" width="15" height="15" fill="#fff" stroke="#8a8d90" stroke-width="1"/></svg>
<svg class="r" style="left:387px;top:881px;" width="19" height="19" viewBox="0 0 19 19"><circle cx="9.5" cy="9.5" r="9.5" fill="#6ca100"/></svg>
<div class="t" style="left:387px;top:881px;width:19px;height:19px;line-height:20.5px;text-align:center;font-size:13px;font-weight:400;color:#fff">S</div>
<div class="t" style="left:408.5px;top:883.45px;font-size:14px;line-height:14px;color:#0088ce;font-weight:400;letter-spacing:0.15px">alertmanager-</div>
<div class="t" style="left:408.5px;top:901.45px;font-size:14px;line-height:14px;color:#0088ce;font-weight:400;letter-spacing:0.15px">operated</div>
<div class="r" style="left:613px;top:881px;width:24px;height:19px;background:#2d7623;border-radius:10px"></div>
<div class="t" style="left:613px;top:881px;width:24px;height:19px;line-height:20px;text-align:center;font-size:12.5px;font-weight:700;color:#fff;letter-spacing:-0.6px">NS</div>
<div class="t" style="left:641.5px;top:883.45px;font-size:14px;line-height:14px;color:#0088ce;font-weight:400;letter-spacing:0.3px">openshift-monitoring</div>
<div class="r" style="left:833px;top:881px;width:198px;height:21px;box-sizing:border-box;background:#f5f5f5;border:1px solid #e6e6e6;border-radius:11px"></div>
<div class="t" style="left:842px;top:884.35px;font-size:14px;line-height:14px;color:#6ca100;font-weight:400;">operated-alertmanager=true</div>
<svg class="r" style="left:1090px;top:884px;" width="14" height="14" viewBox="0 0 14 14"><circle cx="5.6" cy="5.6" r="4.3" fill="none" stroke="#1f7f86" stroke-width="2.2"/><line x1="8.6" y1="8.6" x2="12.8" y2="12.8" stroke="#1f7f86" stroke-width="2.8" stroke-linecap="round"/></svg>
<div class="t" style="left:1106.5px;top:883.45px;font-size:14px;line-height:14px;color:#1f7f86;font-weight:400;">app=alertmanager</div>
<div class="t" style="left:1293.5px;top:883.45px;font-size:14px;line-height:14px;color:#3a3a3a;font-weight:400;">None</div>
<svg class="r" style="left:1446px;top:886px;" width="6" height="16" viewBox="0 0 6 16"><g fill="#151515"><circle cx="3" cy="2.1" r="2.05"/><circle cx="3" cy="7" r="2.05"/><circle cx="3" cy="11.9" r="2.05"/></g></svg>
<div class="r" style="left:317px;top:917px;width:1159px;height:1px;background:#d2d2d2"></div>
<svg class="r" style="left:355px;top:927px;" width="16" height="16" viewBox="0 0 16 16"><rect x="0.5" y="0.5" width="15" height="15" fill="#fff" stroke="#8a8d90" stroke-width="1"/></svg>
<svg class="r" style="left:387px;top:925px;" width="19" height="19" viewBox="0 0 19 19"><circle cx="9.5" cy="9.5" r="9.5" fill="#6ca100"/></svg>
<div class="t" style="left:387px;top:925px;width:19px;height:19px;line-height:20.5px;text-align:center;font-size:13px;font-weight:400;color:#fff">S</div>
<div class="t" style="left:408.5px;top:927.45px;font-size:14px;line-height:14px;color:#0088ce;font-weight:400;letter-spacing:0.15px">api</div>
<div class="r" style="left:613px;top:925px;width:24px;height:19px;background:#2d7623;border-radius:10px"></div>
<div class="t" style="left:613px;top:925px;width:24px;height:19px;line-height:20px;text-align:center;font-size:12.5px;font-weight:700;color:#fff;letter-spacing:-0.6px">NS</div>
<div class="t" style="left:641.5px;top:927.45px;font-size:14px;line-height:14px;color:#0088ce;font-weight:400;letter-spacing:0.3px">openshift-apiserver</div>
<div class="t" style="left:833px;top:927.45px;font-size:14px;line-height:14px;color:#9a9a9a;font-weight:400;">No labels</div>
<svg class="r" style="left:1090px;top:928px;" width="14" height="14" viewBox="0 0 14 14"><circle cx="5.6" cy="5.6" r="4.3" fill="none" stroke="#1f7f86" stroke-width="2.2"/><line x1="8.6" y1="8.6" x2="12.8" y2="12.8" stroke="#1f7f86" stroke-width="2.8" stroke-linecap="round"/></svg>
<div class="t" style="left:1106.5px;top:927.45px;font-size:14px;line-height:14px;color:#1f7f86;font-weight:400;">apiserver=true</div>
<div class="t" style="left:1293.5px;top:927.45px;font-size:14px;line-height:14px;color:#3a3a3a;font-weight:400;">172.30.4.39:443</div>
<svg class="r" style="left:1446px;top:930px;" width="6" height="16" viewBox="0 0 6 16"><g fill="#151515"><circle cx="3" cy="2.1" r="2.05"/><circle cx="3" cy="7" r="2.05"/><circle cx="3" cy="11.9" r="2.05"/></g></svg>
<div class="r" style="left:317px;top:961px;width:1159px;height:1px;background:#d2d2d2"></div>
<svg class="r" style="left:355px;top:971px;" width="16" height="16" viewBox="0 0 16 16"><rect x="0.5" y="0.5" width="15" height="15" fill="#fff" stroke="#8a8d90" stroke-width="1"/></svg>
<svg class="r" style="left:387px;top:969px;" width="19" height="19" viewBox="0 0 19 19"><circle cx="9.5" cy="9.5" r="9.5" fill="#6ca100"/></svg>
<div class="t" style="left:387px;top:969px;width:19px;height:19px;line-height:20.5px;text-align:center;font-size:13px;font-weight:400;color:#fff">S</div>
<div class="t" style="left:408.5px;top:971.45px;font-size:14px;line-height:14px;color:#0088ce;font-weight:400;letter-spacing:0.15px">apiserver</div>
<div class="r" style="left:613px;top:969px;width:24px;height:19px;background:#2d7623;border-radius:10px"></div>
<div class="t" style="left:613px;top:969px;width:24px;height:19px;line-height:20px;text-align:center;font-size:12.5px;font-weight:700;color:#fff;letter-spacing:-0.6px">NS</div>
<div class="t" style="left:641.5px;top:971.45px;font-size:14px;line-height:14px;color:#0088ce;font-weight:400;letter-spacing:0.3px">openshift-</div>
<div class="t" style="left:641.5px;top:992.45px;font-size:14px;line-height:14px;color:#0088ce;font-weight:400;letter-spacing:0.3px">kube-apiserver</div>
<div class="t" style="left:833px;top:971.45px;font-size:14px;line-height:14px;color:#9a9a9a;font-weight:400;">No labels</div>
<svg class="r" style="left:1090px;top:972px;" width="14" height="14" viewBox="0 0 14 14"><circle cx="5.6" cy="5.6" r="4.3" fill="none" stroke="#1f7f86" stroke-width="2.2"/><line x1="8.6" y1="8.6" x2="12.8" y2="12.8" stroke="#1f7f86" stroke-width="2.8" stroke-linecap="round"/></svg>
<div class="t" style="left:1106.5px;top:971.45px;font-size:14px;line-height:14px;color:#1f7f86;font-weight:400;">apiserver=true</div>
<div class="t" style="left:1293.5px;top:971.45px;font-size:14px;line-height:14px;color:#3a3a3a;font-weight:400;">172.30.188.255:443</div>
<svg class="r" style="left:1446px;top:974px;" width="6" height="16" viewBox="0 0 6 16"><g fill="#151515"><circle cx="3" cy="2.1" r="2.05"/><circle cx="3" cy="7" r="2.05"/><circle cx="3" cy="11.9" r="2.05"/></g></svg>
<div class="r" style="left:317px;top:1019px;width:1159px;height:1px;background:#d2d2d2"></div>
<svg class="r" style="left:355px;top:1037px;" width="16" height="16" viewBox="0 0 16 16"><rect x="0.5" y="0.5" width="15" height="15" fill="#fff" stroke="#8a8d90" stroke-width="1"/></svg>
<svg class="r" style="left:387px;top:1035px;" width="19" height="19" viewBox="0 0 19 19"><circle cx="9.5" cy="9.5" r="9.5" fill="#6ca100"/></svg>
<div class="t" style="left:387px;top:1035px;width:19px;height:19px;line-height:20.5px;text-align:center;font-size:13px;font-weight:400;color:#fff">S</div>
<div class="t" style="left:408.5px;top:1037.45px;font-size:14px;line-height:14px;color:#0088ce;font-weight:400;letter-spacing:0.15px">alertmanager-</div>
<div class="t" style="left:408.5px;top:1055.45px;font-size:14px;line-height:14px;color:#0088ce;font-weight:400;letter-spacing:0.15px">main</div>
<div class="r" style="left:613px;top:1035px;width:24px;height:19px;background:#2d7623;border-radius:10px"></div>
<div class="t" style="left:613px;top:1035px;width:24px;height:19px;line-height:20px;text-align:center;font-size:12.5px;font-weight:700;color:#fff;letter-spacing:-0.6px">NS</div>
<div class="t" style="left:641.5px;top:1037.45px;font-size:14px;line-height:14px;color:#0088ce;font-weight:400;letter-spacing:0.3px">openshift-monitoring</div>
<div class="r" style="left:833px;top:1035px;width:142px;height:21px;box-sizing:border-box;background:#f5f5f5;border:1px solid #e6e6e6;border-radius:11px"></div>
<div class="t" style="left:842px;top:1038.35px;font-size:14px;line-height:14px;color:#6ca100;font-weight:400;">alertmanager=main</div>
<svg class="r" style="left:1090px;top:1038px;" width="14" height="14" viewBox="0 0 14 14"><circle cx="5.6" cy="5.6" r="4.3" fill="none" stroke="#1f7f86" stroke-width="2.2"/><line x1="8.6" y1="8.6" x2="12.8" y2="12.8" stroke="#1f7f86" stroke-width="2.8" stroke-linecap="round"/></svg>
<div class="t" style="left:1106.5px;top:1037.45px;font-size:14px;line-height:14px;color:#1f7f86;font-weight:400;">alertmanager=main,</div>
<div class="t" style="left:1089.5px;top:1055.45px;font-size:14px;line-height:14px;color:#1f7f86;font-weight:400;">app=alertmanager</div>
<div class="t" style="left:1293.5px;top:1037.45px;font-size:14px;line-height:14px;color:#3a3a3a;font-weight:400;">172.30.154.40:9094</div>
<svg class="r" style="left:1446px;top:1040px;" width="6" height="16" viewBox="0 0 6 16"><g fill="#151515"><circle cx="3" cy="2.1" r="2.05"/><circle cx="3" cy="7" r="2.05"/><circle cx="3" cy="11.9" r="2.05"/></g></svg>
<div class="r" style="left:317px;top:1084px;width:1159px;height:1px;background:#d2d2d2"></div>
<svg class="r" style="left:355px;top:1095px;" width="16" height="16" viewBox="0 0 16 16"><rect x="0.5" y="0.5" width="15" height="15" fill="#fff" stroke="#8a8d90" stroke-width="1"/></svg>
<svg class="r" style="left:387px;top:1093px;" width="19" height="19" viewBox="0 0 19 19"><circle cx="9.5" cy="9.5" r="9.5" fill="#6ca100"/></svg>
<div class="t" style="left:387px;top:1093px;width:19px;height:19px;line-height:20.5px;text-align:center;font-size:13px;font-weight:400;color:#fff">S</div>
<div class="t" style="left:408.5px;top:1095.45px;font-size:14px;line-height:14px;color:#0088ce;font-weight:400;letter-spacing:0.15px">alertmanager-</div>
<div class="t" style="left:408.5px;top:1113.45px;font-size:14px;line-height:14px;color:#0088ce;font-weight:400;letter-spacing:0.15px">operated</div>
<div class="r" style="left:613px;top:1093px;width:24px;height:19px;background:#2d7623;border-radius:10px"></div>
<div class="t" style="left:613px;top:1093px;width:24px;height:19px;line-height:20px;text-align:center;font-size:12.5px;font-weight:700;color:#fff;letter-spacing:-0.6px">NS</div>
<div class="t" style="left:641.5px;top:1095.45px;font-size:14px;line-height:14px;color:#0088ce;font-weight:400;letter-spacing:0.3px">openshift-monitoring</div>
<div class="r" style="left:833px;top:1093px;width:198px;height:21px;box-sizing:border-box;background:#f5f5f5;border:1px solid #e6e6e6;border-radius:11px"></div>
<div class="t" style="left:842px;top:1096.35px;font-size:14px;line-height:14px;color:#6ca100;font-weight:400;">operated-alertmanager=true</div>
<svg class="r" style="left:1090px;top:1096px;" width="14" height="14" viewBox="0 0 14 14"><circle cx="5.6" cy="5.6" r="4.3" fill="none" stroke="#1f7f86" stroke-width="2.2"/><line x1="8.6" y1="8.6" x2="12.8" y2="12.8" stroke="#1f7f86" stroke-width="2.8" stroke-linecap="round"/></svg>
<div class="t" style="left:1106.5px;top:1095.45px;font-size:14px;line-height:14px;color:#1f7f86;font-weight:400;">app=alertmanager</div>
<div class="t" style="left:1293.5px;top:1095.45px;font-size:14px;line-height:14px;color:#3a3a3a;font-weight:400;">None</div>
<svg class="r" style="left:1446px;top:1098px;" width="6" height="16" viewBox="0 0 6 16"><g fill="#151515"><circle cx="3" cy="2.1" r="2.05"/><circle cx="3" cy="7" r="2.05"/><circle cx="3" cy="11.9" r="2.05"/></g></svg>
<div class="r" style="left:317px;top:1128px;width:1159px;height:1px;background:#d2d2d2"></div>
<svg class="r" style="left:355px;top:1139px;" width="16" height="16" viewBox="0 0 16 16"><rect x="0.5" y="0.5" width="15" height="15" fill="#fff" stroke="#8a8d90" stroke-width="1"/></svg>
<svg class="r" style="left:387px;top:1137px;" width="19" height="19" viewBox="0 0 19 19"><circle cx="9.5" cy="9.5" r="9.5" fill="#6ca100"/></svg>
<div class="t" style="left:387px;top:1137px;width:19px;height:19px;line-height:20.5px;text-align:center;font-size:13px;font-weight:400;color:#fff">S</div>
<div class="t" style="left:408.5px;top:1139.45px;font-size:14px;line-height:14px;color:#0088ce;font-weight:400;letter-spacing:0.15px">api</div>
<div class="r" style="left:613px;top:1137px;width:24px;height:19px;background:#2d7623;border-radius:10px"></div>
<div class="t" style="left:613px;top:1137px;width:24px;height:19px;line-height:20px;text-align:center;font-size:12.5px;font-weight:700;color:#fff;letter-spacing:-0.6px">NS</div>
<div class="t" style="left:641.5px;top:1139.45px;font-size:14px;line-height:14px;color:#0088ce;font-weight:400;letter-spacing:0.3px">openshift-apiserver</div>
<div class="t" style="left:833px;top:1139.45px;font-size:14px;line-height:14px;color:#9a9a9a;font-weight:400;">No labels</div>
<svg class="r" style="left:1090px;top:1140px;" width="14" height="14" viewBox="0 0 14 14"><circle cx="5.6" cy="5.6" r="4.3" fill="none" stroke="#1f7f86" stroke-width="2.2"/><line x1="8.6" y1="8.6" x2="12.8" y2="12.8" stroke="#1f7f86" stroke-width="2.8" stroke-linecap="round"/></svg>
<div class="t" style="left:1106.5px;top:1139.45px;font-size:14px;line-height:14px;color:#1f7f86;font-weight:400;">apiserver=true</div>
<div class="t" style="left:1293.5px;top:1139.45px;font-size:14px;line-height:14px;color:#3a3a3a;font-weight:400;">172.30.4.39:443</div>
<svg class="r" style="left:1446px;top:1142px;" width="6" height="16" viewBox="0 0 6 16"><g fill="#151515"><circle cx="3" cy="2.1" r="2.05"/><circle cx="3" cy="7" r="2.05"/><circle cx="3" cy="11.9" r="2.05"/></g></svg>
<div class="r" style="left:317px;top:1172px;width:1159px;height:1px;background:#d2d2d2"></div>
<svg class="r" style="left:355px;top:1183px;" width="16" height="16" viewBox="0 0 16 16"><rect x="0.5" y="0.5" width="15" height="15" fill="#fff" stroke="#8a8d90" stroke-width="1"/></svg>
<svg class="r" style="left:387px;top:1181px;" width="19" height="19" viewBox="0 0 19 19"><circle cx="9.5" cy="9.5" r="9.5" fill="#6ca100"/></svg>
<div class="t" style="left:387px;top:1181px;width:19px;height:19px;line-height:20.5px;text-align:center;font-size:13px;font-weight:400;color:#fff">S</div>
<div class="t" style="left:408.5px;top:1183.45px;font-size:14px;line-height:14px;color:#0088ce;font-weight:400;letter-spacing:0.15px">apiserver</div>
<div class="r" style="left:613px;top:1181px;width:24px;height:19px;background:#2d7623;border-radius:10px"></div>
<div class="t" style="left:613px;top:1181px;width:24px;height:19px;line-height:20px;text-align:center;font-size:12.5px;font-weight:700;color:#fff;letter-spacing:-0.6px">NS</div>
<div class="t" style="left:641.5px;top:1183.45px;font-size:14px;line-height:14px;color:#0088ce;font-weight:400;letter-spacing:0.3px">openshift-</div>
<div class="t" style="left:641.5px;top:1204.45px;font-size:14px;line-height:14px;color:#0088ce;font-weight:400;letter-spacing:0.3px">kube-apiserver</div>
<div class="t" style="left:833px;top:1183.45px;font-size:14px;line-height:14px;color:#9a9a9a;font-weight:400;">No labels</div>
<svg class="r" style="left:1090px;top:1184px;" width="14" height="14" viewBox="0 0 14 14"><circle cx="5.6" cy="5.6" r="4.3" fill="none" stroke="#1f7f86" stroke-width="2.2"/><line x1="8.6" y1="8.6" x2="12.8" y2="12.8" stroke="#1f7f86" stroke-width="2.8" stroke-linecap="round"/></svg>
<div class="t" style="left:1106.5px;top:1183.45px;font-size:14px;line-height:14px;color:#1f7f86;font-weight:400;">apiserver=true</div>
<div class="t" style="left:1293.5px;top:1183.45px;font-size:14px;line-height:14px;color:#3a3a3a;font-weight:400;">172.30.188.255:443</div>
<svg class="r" style="left:1446px;top:1186px;" width="6" height="16" viewBox="0 0 6 16"><g fill="#151515"><circle cx="3" cy="2.1" r="2.05"/><circle cx="3" cy="7" r="2.05"/><circle cx="3" cy="11.9" r="2.05"/></g></svg>
<div class="r" style="left:0px;top:0px;width:1500px;height:1256px;background:rgba(0,0,0,0.2)"></div>
<div class="r" style="left:595px;top:259px;width:600px;height:258px;background:#fff;box-shadow:0 8px 18px rgba(3,3,3,0.18), 0 0 6px rgba(3,3,3,0.08)"></div>
<div class="t" style="left:626px;top:296.88px;font-size:24px;line-height:24px;color:#151515;font-weight:400;letter-spacing:0.33px">Edit saved filters</div>
<svg class="r" style="left:1152px;top:303px;" width="12" height="12" viewBox="0 0 12 12"><path d="M1.2 1.2 L10.8 10.8 M10.8 1.2 L1.2 10.8" stroke="#6a6e73" stroke-width="2.6"/></svg>
<div class="t" style="left:626.5px;top:338.15px;font-size:14px;line-height:14px;color:#0066cc;font-weight:700;">Name</div>
<svg class="r" style="left:694px;top:336px;" width="10" height="16" viewBox="0 0 10 16"><path d="M5 0.5 L9.5 5.5 H6.5 V15 H3.5 V5.5 H0.5 Z" fill="#0066cc"/></svg>
<div class="t" style="left:634.5px;top:389.66px;font-size:16px;line-height:16px;color:#151515;font-weight:400;letter-spacing:0.5px">administrator-filter</div>
<svg class="r" style="left:1094px;top:388px;" width="19" height="19" viewBox="0 0 19 19"><g transform="translate(1.4 17.2) rotate(-45)" fill="#6a6e73"><path d="M0 0 L3.4 -2.9 H15.4 V2.9 H3.4 Z"/><rect x="16.5" y="-2.9" width="3.8" height="5.8" rx="1"/><path d="M5.5 -0.9 H13.5" stroke="#fff" stroke-width="0.9"/></g></svg>
<svg class="r" style="left:1135px;top:389px;" width="16" height="16" viewBox="0 0 16 16"><circle cx="8" cy="8" r="8" fill="#6a6e73"/><rect x="3.5" y="6.6" width="9" height="2.8" fill="#fff"/></svg>
<div class="r" style="left:627px;top:432px;width:536px;height:1px;background:#d2d2d2"></div>
<div class="r" style="left:627px;top:457px;width:68px;height:36px;background:#0066cc;border-radius:3px"></div>
<div class="t" style="left:643px;top:467.06px;font-size:16px;line-height:16px;color:#ffffff;font-weight:400;">Save</div>
<div class="t" style="left:719px;top:467.06px;font-size:16px;line-height:16px;color:#0066cc;font-weight:400;">Cancel</div>
<svg class="r" style="left:624px;top:480px;" width="76" height="40" viewBox="0 0 76 40"><g stroke="#ff00ff" stroke-width="1.3">
<line x1="1" y1="2" x2="18.5" y2="15"/><line x1="1" y1="20" x2="19" y2="20"/><line x1="19" y1="25.5" x2="1" y2="38.5"/>
<line x1="55.5" y1="15" x2="73" y2="2"/><line x1="55.5" y1="20" x2="73" y2="20"/><line x1="55.5" y1="25.5" x2="73" y2="38.5"/></g></svg>
<svg class="r" style="left:636px;top:474px;" width="50" height="50" viewBox="0 0 50 50"><path d="M18 6 H22 V7.4 H24 V15.1 H28 V17.1 H34 V19.3 H39.8 V34 H37.8 V38 H35.8 V43.6 H20 V39.8 H18 V38.2 H16 V35.8 H14 V31.8 H12 V29.7 H10 V21.9 H14 V24.3 H16 V7.5 H18 Z" fill="#fff" style="filter:drop-shadow(1px 2px 2px rgba(0,0,0,0.35))"/><g fill="#ff00ff" shape-rendering="crispEdges"><rect x="18" y="6" width="4" height="1.7"/><rect x="16" y="7.5" width="2" height="22.2"/><rect x="22" y="7.4" width="2" height="16.6"/><rect x="24" y="15.1" width="4.5" height="1.7"/><rect x="28" y="16.7" width="2" height="7.3"/><rect x="30" y="17.1" width="4.5" height="1.7"/><rect x="34" y="18.7" width="2" height="6.8"/><rect x="36" y="19.3" width="3.8" height="1.7"/><rect x="37.8" y="19.5" width="2" height="14.5"/><rect x="35.8" y="34" width="2" height="4"/><rect x="33.8" y="38" width="2" height="5.6"/><rect x="10" y="21.9" width="4" height="1.7"/><rect x="10" y="21.9" width="2" height="7.8"/><rect x="14" y="24.3" width="2" height="2.2"/><rect x="12" y="29.7" width="2" height="2.1"/><rect x="14" y="31.8" width="2" height="4"/><rect x="16" y="35.8" width="2" height="2.4"/><rect x="18" y="38.2" width="2" height="1.6"/><rect x="20" y="39.8" width="2" height="3.8"/></g></svg>
</body></html>
